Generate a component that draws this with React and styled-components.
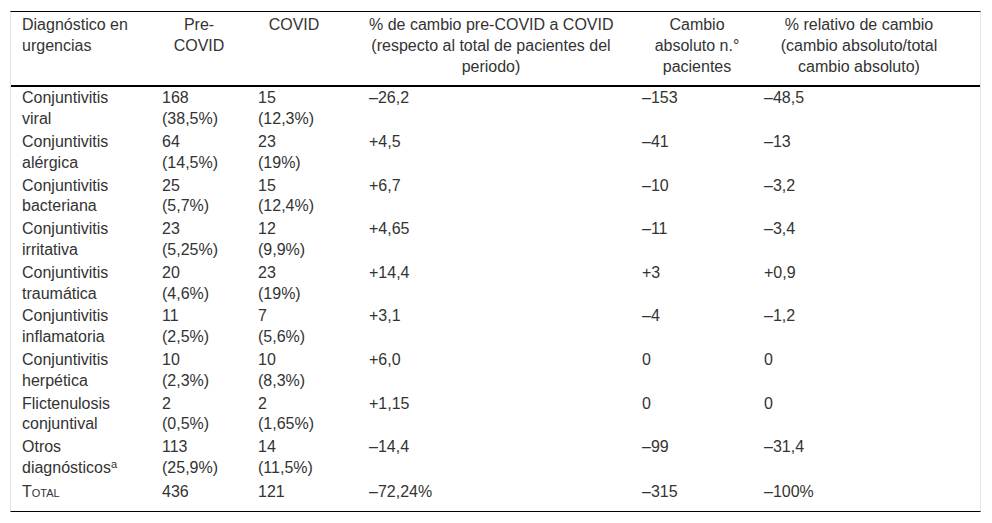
import React from 'react';
import styled, { createGlobalStyle } from 'styled-components';

const GlobalStyle = createGlobalStyle`
  html, body {
    margin: 0;
    padding: 0;
    background: #ffffff;
  }
`;

const Page = styled.div`
  padding: 11px 0 0 10px;
  font-family: 'Liberation Sans', Arial, sans-serif;
  font-size: 16px;
  line-height: 20.8px;
  color: #333333;
`;

const Frame = styled.div`
  width: 969px;
  border-top: 1px solid #000000;
  border-bottom: 1px solid #000000;
  border-left: 1px solid #e3e3e3;
  border-right: 1px solid #e3e3e3;
`;

const Table = styled.table`
  width: 969px;
  table-layout: fixed;
  border-collapse: collapse;
  border-spacing: 0;
`;

const HeadCell = styled.th`
  font-weight: 400;
  white-space: nowrap;
  vertical-align: top;
  text-align: ${(p) => p.$align};
  padding: 3px ${(p) => p.$pr}px 8px ${(p) => p.$pl}px;
  border-bottom: 2px solid #000000;
`;

const Cell = styled.td`
  white-space: nowrap;
  vertical-align: top;
  text-align: left;
  padding: ${(p) => (p.$last ? '2px' : '1px')} ${(p) => p.$pr}px
    ${(p) => (p.$last ? '8px' : '1px')} ${(p) => p.$pl}px;
`;

const SmallCaps = styled.span`
  font-variant: small-caps;
`;

const Sup = styled.sup`
  font-size: 11px;
  line-height: 0;
  vertical-align: 5px;
`;

const cols = [
  { w: 141, pl: 11, pr: 18, align: 'left' },
  { w: 96, pl: 10, pr: 12, align: 'center' },
  { w: 111, pl: 10, pr: 29, align: 'center' },
  { w: 273, pl: 10, pr: 19, align: 'center' },
  { w: 122, pl: 10, pr: 2, align: 'center' },
  { w: 226, pl: 10, pr: 26, align: 'center' },
];

const headers = [
  ['Diagnóstico en', 'urgencias'],
  ['Pre-', 'COVID'],
  ['COVID'],
  ['% de cambio pre-COVID a COVID', '(respecto al total de pacientes del', 'periodo)'],
  ['Cambio', 'absoluto n.°', 'pacientes'],
  ['% relativo de cambio', '(cambio absoluto/total', 'cambio absoluto)'],
];

const rows = [
  [['Conjuntivitis', 'viral'], ['168', '(38,5%)'], ['15', '(12,3%)'], '–26,2', '–153', '–48,5'],
  [['Conjuntivitis', 'alérgica'], ['64', '(14,5%)'], ['23', '(19%)'], '+4,5', '–41', '–13'],
  [['Conjuntivitis', 'bacteriana'], ['25', '(5,7%)'], ['15', '(12,4%)'], '+6,7', '–10', '–3,2'],
  [['Conjuntivitis', 'irritativa'], ['23', '(5,25%)'], ['12', '(9,9%)'], '+4,65', '–11', '–3,4'],
  [['Conjuntivitis', 'traumática'], ['20', '(4,6%)'], ['23', '(19%)'], '+14,4', '+3', '+0,9'],
  [['Conjuntivitis', 'inflamatoria'], ['11', '(2,5%)'], ['7', '(5,6%)'], '+3,1', '–4', '–1,2'],
  [['Conjuntivitis', 'herpética'], ['10', '(2,3%)'], ['10', '(8,3%)'], '+6,0', '0', '0'],
  [['Flictenulosis', 'conjuntival'], ['2', '(0,5%)'], ['2', '(1,65%)'], '+1,15', '0', '0'],
  [
    [
      'Otros',
      <>
        diagnósticos<Sup>a</Sup>
      </>,
    ],
    ['113', '(25,9%)'],
    ['14', '(11,5%)'],
    '–14,4',
    '–99',
    '–31,4',
  ],
  [<SmallCaps>Total</SmallCaps>, '436', '121', '–72,24%', '–315', '–100%'],
];

function Lines({ value }) {
  if (!Array.isArray(value)) return value;
  return value.map((line, i) => (
    <React.Fragment key={i}>
      {i > 0 && <br />}
      {line}
    </React.Fragment>
  ));
}

export default function App() {
  return (
    <Page>
      <GlobalStyle />
      <Frame>
        <Table>
          <colgroup>
            {cols.map((c, i) => (
              <col key={i} style={{ width: c.w }} />
            ))}
          </colgroup>
          <thead>
            <tr>
              {headers.map((h, i) => (
                <HeadCell
                  key={i}
                  $align={cols[i].align}
                  $pl={cols[i].pl}
                  $pr={cols[i].pr}
                >
                  <Lines value={h} />
                </HeadCell>
              ))}
            </tr>
          </thead>
          <tbody>
            {rows.map((row, r) => (
              <tr key={r}>
                {row.map((v, i) => (
                  <Cell
                    key={i}
                    $pl={cols[i].pl}
                    $pr={cols[i].pr}
                    $last={r === rows.length - 1}
                  >
                    <Lines value={v} />
                  </Cell>
                ))}
              </tr>
            ))}
          </tbody>
        </Table>
      </Frame>
    </Page>
  );
}
